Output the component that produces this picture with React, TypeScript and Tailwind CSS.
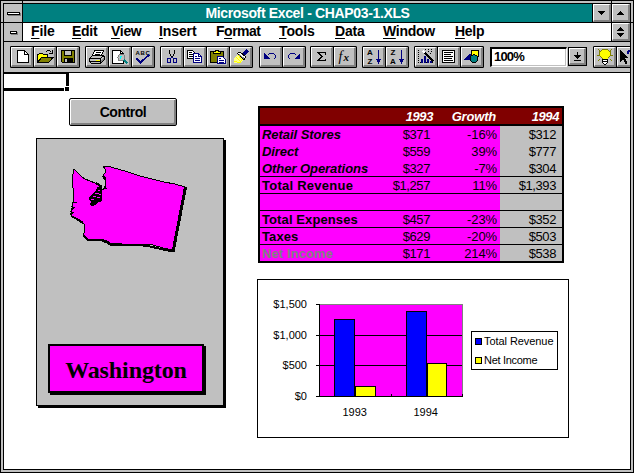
import type { ReactNode } from "react";

const SANS = "font-['Liberation_Sans',Arial,sans-serif]";

/* ---------- toolbar drawings, 24x22 button grid ---------- */

const page = "M7.5 4.5H14.5L18.5 8.5V16.5H7.5Z";

const icons: Record<string, ReactNode> = {
  blank: (
    <>
      <path d={page} fill="#fff" stroke="#000" />
      <path d="M14.5 4.5V8.5H18.5" fill="none" stroke="#000" />
    </>
  ),
  open: (
    <>
      <path d="M4.5 16.5V8.5H5.5L6.5 7.5H9.5L10.5 8.5H14.5V11.5" fill="#ff0" stroke="#000" />
      <path d="M4.5 16.5L8.5 11.5H20L15.5 16.5Z" fill="#808000" stroke="#000" />
      <path d="M12.5 6.5L14.5 4.5H16.5L18.5 6.5M19.5 4V7.5H16" fill="none" stroke="#000" />
    </>
  ),
  save: (
    <>
      <path d="M5.5 4.5H18.5V16.5H6.5L5.5 15.5Z" fill="#808000" stroke="#000" />
      <path d="M8.5 4.5H15.5V9.5H8.5Z" fill="#c0c0c0" stroke="#000" />
      <path d="M8 12H17V17H8Z" fill="#000" />
      <path d="M9 13H11V16H9Z" fill="#c0c0c0" />
    </>
  ),
  print: (
    <>
      <path d="M9.5 4.5H18.5L16.5 9.5H7.5Z" fill="#fff" stroke="#000" />
      <path d="M11 6.5H16M10 8.5H15" stroke="#000" />
      <path d="M7.5 9.5L4.5 12.5V15.5L6.5 17.5H15.5L19.5 13.5V10.5L17.5 9.5Z" fill="#c0c0c0" stroke="#000" />
      <path d="M4.5 12.5H15.5L18.5 9.5M15.5 12.5V17M5 15.5H15" fill="none" stroke="#000" />
      <path d="M11 14H15V15H11Z" fill="#ff0" />
      <path d="M16 14L19 11V13L16 16Z" fill="#808080" />
    </>
  ),
  preview: (
    <>
      <path d="M4.5 4.5H12.5L15.5 7.5V17.5H4.5Z" fill="#fff" stroke="#000" />
      <path d="M12.5 4.5V7.5H15.5" fill="none" stroke="#000" />
      <circle cx="13.5" cy="11.5" r="3.5" fill="#c0c0c0" stroke="#808080" />
      <path d="M12 10H14V11H13V13H12Z" fill="#0ff" />
      <path d="M16 14L19.5 17.5" stroke="#008080" strokeWidth="2" />
    </>
  ),
  spell: (
    <>
      <text x="4.4" y="8.6" fontSize="6" fontWeight="700" textLength="14.5" fontFamily="Liberation Sans">ABC</text>
      <path d="M5.5 12.5L9.5 16.5L18.5 8.5" fill="none" stroke="#000080" strokeWidth="1.8" />
    </>
  ),
  cut: (
    <>
      <path d="M9.5 4V7.5L12.5 12M14.5 4V7.5L11.5 12" fill="none" stroke="#000" />
      <rect x="7.5" y="12.5" width="3" height="4" rx="1" fill="none" stroke="#000080" />
      <rect x="13.5" y="12.5" width="3" height="4" rx="1" fill="none" stroke="#000080" />
      <path d="M10.5 12.5L12 11L13.5 12.5" fill="none" stroke="#000080" />
    </>
  ),
  copy: (
    <>
      <path d="M4.5 4.5H9.5L12.5 7.5V12.5H4.5Z" fill="#fff" stroke="#000" />
      <path d="M6 6.5H9M6 8.5H10M6 10.5H10" stroke="#000" />
      <path d="M10.5 7.5H15.5L18.5 10.5V16.5H10.5Z" fill="#fff" stroke="#000080" />
      <path d="M15.5 7.5V10.5H18.5M12 10.5H14M12 12.5H17M12 14.5H17" fill="none" stroke="#000080" />
    </>
  ),
  paste: (
    <>
      <rect x="4.5" y="5.5" width="13" height="11" rx="1" fill="#808000" stroke="#000" />
      <path d="M7.5 7.5H14.5V5.5H12.5V4.5H9.5V5.5H7.5Z" fill="#ff0" stroke="#000" />
      <path d="M11.5 10.5H16.5L19.5 13.5V17.5H11.5Z" fill="#fff" stroke="#000080" />
      <path d="M13 12.5H15M13 14.5H18M13 16H18" stroke="#000080" />
    </>
  ),
  brush: (
    <>
      <path d="M5 12L9 8L15 13L11 17H5Z" fill="#ff8" />
      <path d="M5 15.5L11 16.5L14 13M7 11L12 16M9 9L13 14" fill="none" stroke="#ff0" />
      <path d="M8.5 7.5L11 6L17 11L15 13.5Z" fill="#fff" stroke="#000" />
      <path d="M10 8.5L15 12.5" stroke="#808080" />
      <path d="M14.5 8.5L18.5 4.5" stroke="#000080" strokeWidth="3.5" />
      <path d="M13 7L16 10" stroke="#000" />
    </>
  ),
  undo: (
    <>
      <path d="M5 7V13H11Z" fill="#000080" />
      <path d="M8.5 9.5L10.5 7.5H14.5L16.5 9.5V11.5L14.5 13.5" fill="none" stroke="#000080" />
    </>
  ),
  redo: (
    <>
      <path d="M18 7V13H12Z" fill="#000080" />
      <path d="M14.5 9.5L12.5 7.5H8.5L6.5 9.5V11.5L8.5 13.5" fill="none" stroke="#000080" />
    </>
  ),
  sum: <path d="M15.5 8.5V6.5H8L12 10.5L8 14.5H15.5V12.5M8.5 6.5L12.5 10.5L8.5 14.5" fill="none" stroke="#000" />,
  fx: (
    <>
      <text x="5.6" y="14.5" fontSize="14" fontStyle="italic" fontFamily="Liberation Serif">f</text>
      <text x="10.4" y="15.2" fontSize="11" fontStyle="italic" fontWeight="700" fontFamily="Liberation Serif">x</text>
    </>
  ),
  az: (
    <>
      <text x="5" y="9.4" fontSize="8" fontWeight="700" fontFamily="Liberation Sans">A</text>
      <text x="5.4" y="17.8" fontSize="8" fontWeight="700" fontFamily="Liberation Sans">Z</text>
      <path d="M16 4H17V13H19L16.5 18L14 13H16Z" fill="#000080" />
    </>
  ),
  za: (
    <>
      <text x="5.4" y="9.4" fontSize="8" fontWeight="700" fontFamily="Liberation Sans">Z</text>
      <text x="5" y="17.8" fontSize="8" fontWeight="700" fontFamily="Liberation Sans">A</text>
      <path d="M16 4H17V13H19L16.5 18L14 13H16Z" fill="#000080" />
    </>
  ),
  chart: (
    <>
      <path d="M4.5 4V16.5H20" fill="none" stroke="#000" strokeDasharray="1 1" />
      <path d="M7 13H9V17H7ZM10 10H12V17H10ZM13 13H15V17H13ZM16 15H18V17H16Z" fill="#000080" />
      <path d="M10 6L19.5 15.5" stroke="#000" strokeWidth="2" />
      <path d="M9 5L11 7" stroke="#fff" strokeWidth="1.5" />
      <path d="M11 3.5H19M14 5.5H20M16 7.5H19" stroke="#000" strokeDasharray="1 2" />
    </>
  ),
  note: (
    <>
      <rect x="5.5" y="4.5" width="12" height="12" fill="#fff" stroke="#000" />
      <path d="M7 6.5H16M7 8.5H14M7 10.5H16M7 12.5H15M7 14.5H16" stroke="#000" />
    </>
  ),
  shapes: (
    <>
      <rect x="11.5" y="4.5" width="7" height="6" fill="#ff0" stroke="#000" />
      <path d="M4 14L9 8H11V14Z" fill="#000080" />
      <circle cx="14" cy="12.7" r="3.8" fill="#008080" stroke="#000" />
    </>
  ),
  bulb: (
    <>
      <path d="M5 3L7 5M17 5L19 3M4 9H6M18 9H20M5 15L7 13M17 13L19 15" stroke="#808000" />
      <path d="M9.5 3.5H14.5L17.5 6V9.5L14.5 12.5V13.5H9.5V12.5L6.5 9.5V6Z" fill="#ff0" stroke="#808000" />
      <path d="M7.5 6.5H16.5V9.5H7.5ZM9.5 4.5H14.5V12.5H9.5Z" fill="#ff0" />
      <path d="M9.5 13.5H14.5V16.5L13 18H11L9.5 16.5Z" fill="#fff" stroke="#000" />
      <path d="M9 15.5H15" stroke="#000" />
    </>
  ),
  help: (
    <>
      <path d="M4 4V16L7 13L9.5 18L11.5 17L9 12H12Z" fill="#000" />
      <path d="M11.5 8V6L13.5 4.5H16.5V9L14.5 11V13M14.5 15V17" fill="none" stroke="#000080" strokeWidth="2" />
    </>
  ),
};

function ToolGroup({ names, className = "" }: { names: string[]; className?: string }) {
  return (
    <div className={`flex shrink-0 rounded-[1px] border border-black bg-black gap-px ${className}`}>
      {names.map((n) => (
        <div
          key={n}
          className="h-5 w-[22px] overflow-hidden border-t border-l border-r-2 border-b-2 border-t-white border-l-white border-r-[#808080] border-b-[#808080] bg-[#c0c0c0]"
        >
          <svg className="-mt-0.5 -ml-0.5 block h-[22px] w-6 max-w-none" viewBox="0 0 24 22" shapeRendering="crispEdges">
            {icons[n]}
          </svg>
        </div>
      ))}
    </div>
  );
}

function SystemBox({ small }: { small?: boolean }) {
  return (
    <div className="flex h-[18px] w-[19px] shrink-0 items-center justify-center border-r border-black bg-[#c0c0c0]">
      <div
        className={`border border-black bg-white shadow-[1px_1px_0_#808080] ${small ? "h-[3px] w-[7px]" : "h-[3px] w-[13px]"}`}
      />
    </div>
  );
}

function SizeButton({ kind }: { kind: "down" | "up" | "both" }) {
  return (
    <div className="flex h-[18px] w-[19px] shrink-0 border-l border-black">
      <div className="flex flex-1 items-center justify-center border-t border-l border-r-2 border-b-2 border-t-white border-l-white border-r-[#808080] border-b-[#808080] bg-[#c0c0c0]">
        <svg className="h-[13px] w-[9px]" viewBox="0 0 9 13" shapeRendering="crispEdges">
          {kind === "down" && <path d="M1 5H8V6H7V7H6V8H5V9H4V8H3V7H2V6H1Z" />}
          {kind === "up" && <path d="M4 5H5V6H6V7H7V8H8V9H1V8H2V7H3V6H4Z" />}
          {kind === "both" && (
            <path d="M4 2H5V3H6V4H7V5H8V6H1V5H2V4H3V3H4ZM1 8H8V9H7V10H6V11H5V12H4V11H3V10H2V9H1Z" />
          )}
        </svg>
      </div>
    </div>
  );
}

const menus = [
  { t: "File", k: 0, w: "w-[41px]", s: "tracking-[-0.1px]" },
  { t: "Edit", k: 0, w: "w-[39px]", s: "tracking-[-0.3px]" },
  { t: "View", k: 0, w: "w-12", s: "tracking-[-0.3px]" },
  { t: "Insert", k: 0, w: "w-[57px]", s: "tracking-[-0.1px]" },
  { t: "Format", k: 1, w: "w-[63px]", s: "tracking-[-0.5px]" },
  { t: "Tools", k: 0, w: "w-14", s: "tracking-[-0.1px]" },
  { t: "Data", k: 0, w: "w-12", s: "tracking-[-0.2px]" },
  { t: "Window", k: 0, w: "w-[72px]", s: "tracking-[-0.3px]" },
  { t: "Help", k: 0, w: "w-10", s: "tracking-[-0.3px]" },
];

type Row = { label: string; a: string; g: string; b: string; look: string; line: boolean };
const rows: Row[] = [
  { label: "Retail Stores", a: "$371", g: "-16%", b: "$312", look: "italic tracking-[-0.05px]", line: false },
  { label: "Direct", a: "$559", g: "39%", b: "$777", look: "italic tracking-[-0.1px]", line: false },
  { label: "Other Operations", a: "$327", g: "-7%", b: "$304", look: "italic tracking-[-0.05px]", line: true },
  { label: "Total Revenue", a: "$1,257", g: "11%", b: "$1,393", look: "tracking-[0.25px]", line: true },
  { label: "", a: "", g: "", b: "", look: "", line: true },
  { label: "Total Expenses", a: "$457", g: "-23%", b: "$352", look: "tracking-[0.1px]", line: true },
  { label: "Taxes", a: "$629", g: "-20%", b: "$503", look: "tracking-[0.1px]", line: true },
  { label: "Net Income", a: "$171", g: "214%", b: "$538", look: "tracking-[0.1px] text-[#808080]", line: false },
];

function RevenueTable() {
  return (
    <div className="h-[157px] w-[306px] border-2 border-black text-[13px] leading-[17px]">
      <div className="flex h-[18px] border-b-2 border-black bg-[#800000] leading-[18px] font-bold text-white italic">
        <span className="w-[173px] text-right tracking-[-0.4px]">1993</span>
        <span className="w-[63px] text-right tracking-[-0.2px]">Growth</span>
        <span className="w-[63px] text-right tracking-[-0.4px]">1994</span>
      </div>
      {rows.map((r, i) => (
        <div
          key={i}
          className={`flex tracking-[-0.4px] ${i === 7 ? "h-4" : "h-[17px]"} ${r.line ? "border-b border-black" : ""}`}
        >
          <div className="flex w-60 bg-[#ff00ff]">
            <span className={`w-28 pl-0.5 font-bold whitespace-nowrap ${r.look}`}>{r.label}</span>
            <span className="w-[58px] text-right">{r.a}</span>
            <span className="w-[67px] text-right tracking-[-0.1px]">{r.g}</span>
          </div>
          <span className="flex-1 bg-[#c0c0c0] pr-[6px] text-right">{r.b}</span>
        </div>
      ))}
    </div>
  );
}

function RevenueChart() {
  return (
    <svg className="block h-[159px] w-[312px]" viewBox="257 279 312 159">
      <g shapeRendering="crispEdges" stroke="#000">
        <rect x="257.5" y="279.5" width="311" height="158" fill="#fff" />
        <rect x="319" y="304" width="144" height="92" fill="#f0f" stroke="none" />
        <path d="M319 304.5H462.5V396" fill="none" stroke="#808080" />
        <path d="M316 304.5H319M316 335.5H462M316 365.5H462M316 396.5H463M319.5 304V397M391.5 394V396M462.5 394V397" fill="none" />
        <rect x="334.5" y="319.5" width="20" height="77" fill="#00f" />
        <rect x="355.5" y="386.5" width="20" height="10" fill="#ff0" />
        <rect x="406.5" y="311.5" width="20" height="85" fill="#00f" />
        <rect x="427.5" y="363.5" width="19" height="33" fill="#ff0" />
        <rect x="471.5" y="331.5" width="86" height="38" fill="#fff" />
        <rect x="475.5" y="338.5" width="6" height="6" fill="#00f" />
        <rect x="475.5" y="357.5" width="6" height="6" fill="#ff0" />
      </g>
      <g fontFamily="'Liberation Sans', Arial, sans-serif" fontSize="11">
        <g textAnchor="end">
          <text x="307" y="308">$1,500</text>
          <text x="307" y="339">$1,000</text>
          <text x="307" y="369">$500</text>
          <text x="307" y="400">$0</text>
        </g>
        <text x="342.5" y="416">1993</text>
        <text x="413.5" y="416">1994</text>
        <text x="484" y="345" textLength="69.5">Total Revenue</text>
        <text x="484" y="364" textLength="53.5">Net Income</text>
      </g>
    </svg>
  );
}

const coast =
  "74,169 76,171 79,174 82,177 85,179 90,181 95,183 99,185 101,188 103,190 104,188 106,188 105,182 106,178 103,176 104,174 106,172 105,169 103,166 107,166 118,169 128,172 140,176 152,179 164,182 175,184 185,187 183,199 179,218 176,235 173,250 163,248 153,245 143,244 133,244 122,244 110,243 107,241 101,239 88,240 83,235 85,231 84,224 81,222 78,220 75,218 71,216 71,212 73,208 72,204 74,202 73,195 73,188 72,181 72,177 73,174";

function StateMap() {
  return (
    <svg className="mt-[21px] ml-[29px] block h-[100px] w-[124px] shrink-0" viewBox="66 160 124 100" shapeRendering="crispEdges">
      <polygon points={coast} fill="#f0f" stroke="#000" />
      {/* sound and islands */}
      <path d="M97 187H102V200L100 202H98L96 205L92 206L89 204L91 202L89 200V197L92 195L93 193L96 191Z" fill="#000" />
      <path d="M93 196.5H96M95 193.5H99M91 199.5H94M98 190.5H100M97 197.5H100M99 194.5H101" stroke="#f0f" fill="none" />
      <path d="M96 183L102 187M103 176L105 180M104 187L106 188" stroke="#000" strokeWidth="2" fill="none" />
      {/* western harbours */}
      <path d="M71 210L73 208M70 215L72 213" stroke="#000" strokeWidth="2" fill="none" />
      <path d="M72 203L77 202M71 206L75 208M70 211L74 213" stroke="#000" fill="none" />
      {/* drop shadow edges */}
      <path d="M185.5 187L173 252" stroke="#000" strokeWidth="3" fill="none" />
      <path d="M71 216L77 219L83 223M84 236L88 240L101 240L108 243L111 245L122 245L134 244.5L148 246L161 249L173 251.5" stroke="#000" strokeWidth="2" fill="none" />
    </svg>
  );
}

export default function App() {
  return (
    <div className={`relative flex h-[473px] w-[634px] flex-col overflow-hidden border border-black bg-[#c0c0c0] p-0.5 text-black ${SANS}`}>
      {/* resize notches in the window frame */}
      <i className="absolute top-0 left-[21px] h-0.5 w-px bg-black" />
      <i className="absolute top-0 right-[21px] h-0.5 w-px bg-black" />
      <i className="absolute top-[21px] left-0 h-px w-0.5 bg-black" />
      <i className="absolute top-[21px] right-0 h-px w-0.5 bg-black" />

      <div className="flex min-h-0 flex-1 flex-col border border-black">
        <div className="flex h-[19px] shrink-0 border-b border-black bg-[#008080]">
          <SystemBox />
          <div className="flex-1 text-center text-[14px] leading-[19px] font-bold tracking-[-0.35px] text-white">
            Microsoft Excel - CHAP03-1.XLS
          </div>
          <SizeButton kind="down" />
          <SizeButton kind="up" />
        </div>

        <div className="flex h-[19px] shrink-0 border-b border-black bg-white">
          <SystemBox small />
          <div className="flex flex-1 pl-2 text-[14px] leading-[17px] font-bold">
            {menus.map((m) => (
              <span key={m.t} className={`${m.w} ${m.s}`}>
                {m.t.slice(0, m.k)}
                <span className="underline decoration-1 underline-offset-2">{m.t[m.k]}</span>
                {m.t.slice(m.k + 1)}
              </span>
            ))}
          </div>
          <SizeButton kind="both" />
        </div>

        <div className="flex h-[31px] shrink-0 items-start overflow-hidden border-b border-black pt-1 pl-1.5">
          <ToolGroup names={["blank", "open", "save"]} />
          <ToolGroup names={["print", "preview", "spell"]} className="ml-[5px]" />
          <ToolGroup names={["cut", "copy", "paste", "brush"]} className="ml-[5px]" />
          <ToolGroup names={["undo", "redo"]} className="ml-[6px]" />
          <ToolGroup names={["sum", "fx"]} className="ml-1" />
          <ToolGroup names={["az", "za"]} className="ml-[5px]" />
          <ToolGroup names={["chart", "note", "shapes"]} className="ml-[5px]" />
          <div className="mt-px ml-1.5 h-5 w-[77px] shrink-0 border-t-2 border-l-2 border-r border-b border-t-black border-l-black border-r-white border-b-white bg-white pl-0.5 text-[13px] leading-[16px] font-bold tracking-[-0.8px] shadow-[inset_-1px_-1px_0_#c0c0c0]">
            100%
          </div>
          <div className="mt-px ml-px flex h-[19px] w-[19px] shrink-0 border border-black">
            <div className="flex flex-1 items-center justify-center border-t border-l border-r-2 border-b-2 border-t-white border-l-white border-r-[#808080] border-b-[#808080]">
              <svg className="h-[9px] w-[7px]" viewBox="0 0 7 9" shapeRendering="crispEdges">
                <path d="M3 0H4V3H7V4H6V5H5V6H4V7H3V6H2V5H1V4H0V3H3ZM0 8H7V9H0Z" />
              </svg>
            </div>
          </div>
          <ToolGroup names={["bulb", "help"]} className="ml-1.5" />
        </div>

        <main className="flex min-h-0 flex-1 bg-white">
          <section className="flex w-[254px] flex-col">
            {/* active cell */}
            <svg className="block h-[18px] w-[65px] shrink-0" viewBox="0 0 65 18" shapeRendering="crispEdges">
              <path d="M0 0H65V13H62V1H0ZM0 15H60V18H0ZM61 14H65V18H61Z" />
            </svg>
            <button className="mt-[7px] ml-[65px] h-7 w-[108px] shrink-0 rounded-[2px] border border-black bg-[#c0c0c0] text-[14px] leading-6 font-bold tracking-[-0.45px] shadow-[inset_1px_1px_0_#fff,inset_-2px_-2px_0_#808080]">
              Control
            </button>
            <div className="mt-3 ml-8 flex h-[268px] w-[188px] shrink-0 flex-col border border-black bg-[#c0c0c0] shadow-[2px_2px_0_#000]">
              <StateMap />
              <div className="mt-auto mb-3 ml-[11px] h-[49px] w-[156px] border-2 border-black bg-[#ff00ff] text-center font-['Liberation_Serif',serif] text-[24px] leading-[49px] font-bold tracking-[-0.1px] shadow-[2px_2px_0_#000]">
                Washington
              </div>
            </div>
          </section>
          <section className="pt-[33px] pl-0">
            <RevenueTable />
            <div className="mt-4 -ml-px">
              <RevenueChart />
            </div>
          </section>
        </main>
      </div>
    </div>
  );
}
